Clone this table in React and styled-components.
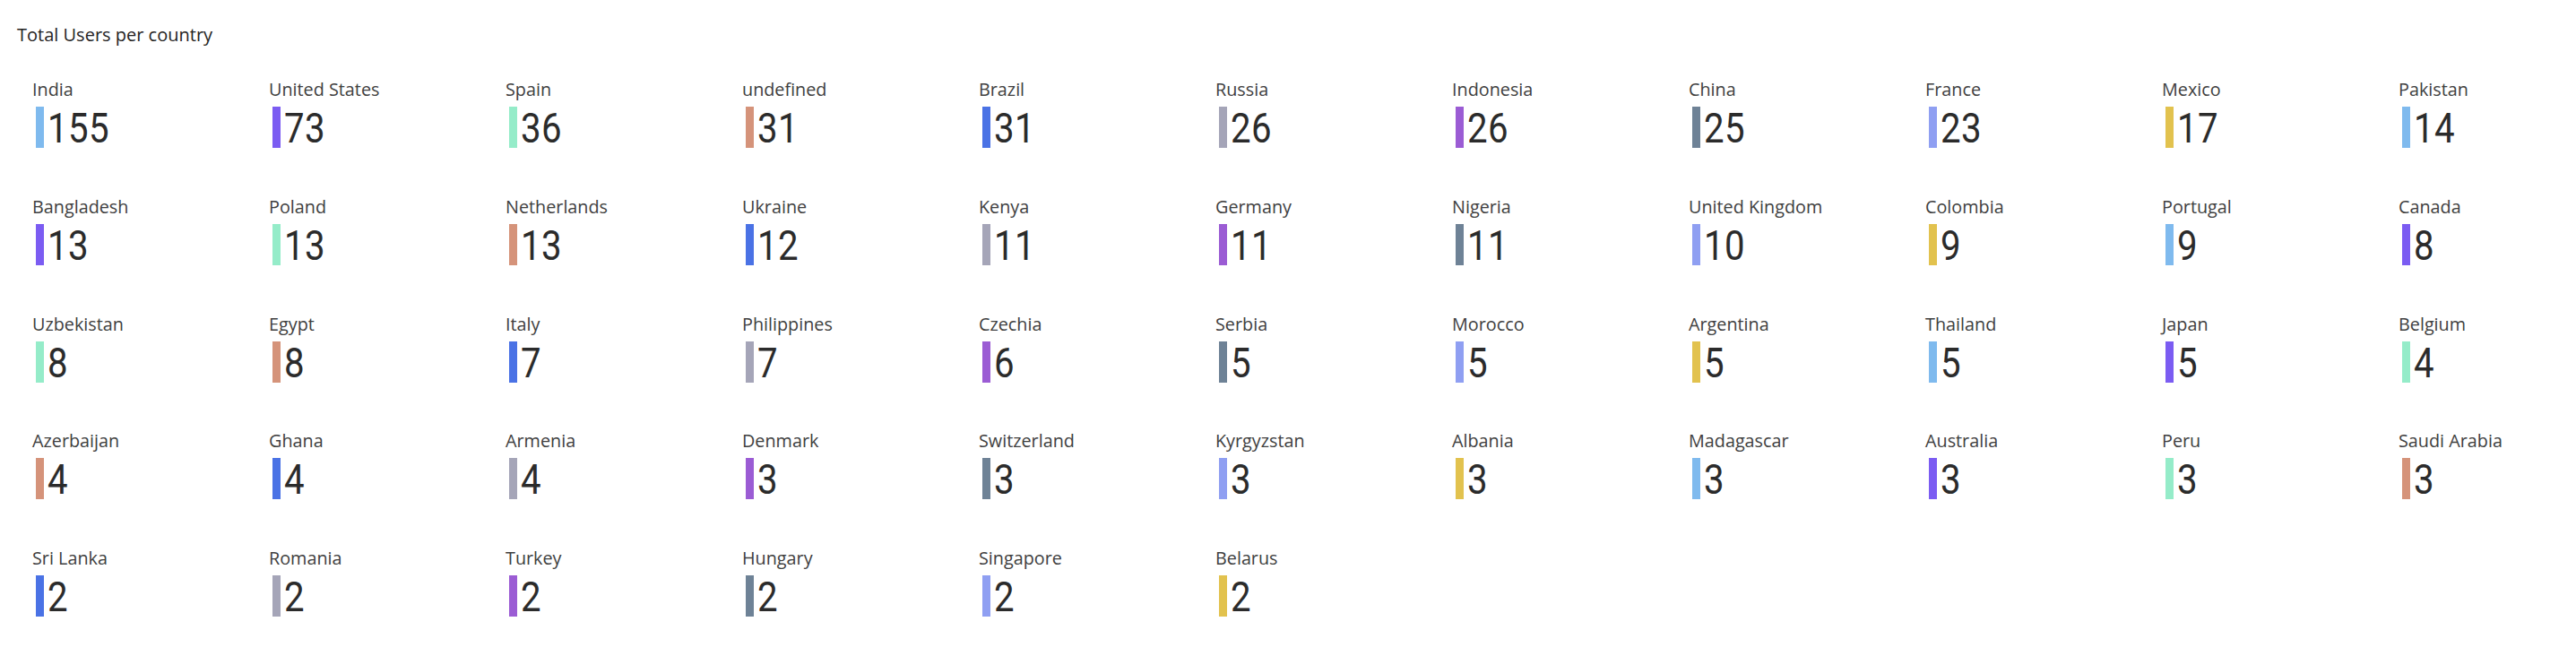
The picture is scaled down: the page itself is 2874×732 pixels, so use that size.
import React from "react";
import styled, { createGlobalStyle } from "styled-components";

const GlobalStyle = createGlobalStyle`
  html, body {
    margin: 0;
    padding: 0;
    background: #ffffff;
  }
  body {
    font-family: "Open Sans", "Noto Sans", sans-serif;
    overflow: hidden;
  }
`;

const PALETTE = [
  "#7FBAEE",
  "#7B5CF2",
  "#95ECC9",
  "#D5937A",
  "#4A72E5",
  "#A5A5B8",
  "#9B5CD4",
  "#6E8296",
  "#8F9FF2",
  "#E2C24E",
];

const DATA = [
  ["India", 155], ["United States", 73], ["Spain", 36], ["undefined", 31],
  ["Brazil", 31], ["Russia", 26], ["Indonesia", 26], ["China", 25],
  ["France", 23], ["Mexico", 17], ["Pakistan", 14], ["Bangladesh", 13],
  ["Poland", 13], ["Netherlands", 13], ["Ukraine", 12], ["Kenya", 11],
  ["Germany", 11], ["Nigeria", 11], ["United Kingdom", 10], ["Colombia", 9],
  ["Portugal", 9], ["Canada", 8], ["Uzbekistan", 8], ["Egypt", 8],
  ["Italy", 7], ["Philippines", 7], ["Czechia", 6], ["Serbia", 5],
  ["Morocco", 5], ["Argentina", 5], ["Thailand", 5], ["Japan", 5],
  ["Belgium", 4], ["Azerbaijan", 4], ["Ghana", 4], ["Armenia", 4],
  ["Denmark", 3], ["Switzerland", 3], ["Kyrgyzstan", 3], ["Albania", 3],
  ["Madagascar", 3], ["Australia", 3], ["Peru", 3], ["Saudi Arabia", 3],
  ["Sri Lanka", 2], ["Romania", 2], ["Turkey", 2], ["Hungary", 2],
  ["Singapore", 2], ["Belarus", 2],
];

const Visual = styled.section`
  width: 100%;
  box-sizing: border-box;
  padding: 25px 0 0 19px;
`;

const Title = styled.h2`
  margin: 0;
  font-family: "Open Sans", "Noto Sans", sans-serif;
  font-size: 20px;
  line-height: 27px;
  font-weight: 400;
  color: #252423;
`;

const CardGrid = styled.div`
  display: grid;
  grid-template-columns: repeat(10, 264px) minmax(0, 1fr);
  row-gap: 50.75px;
  margin-top: 35px;
  padding-left: 17px;
`;

const Card = styled.div`
  display: flex;
  flex-direction: column;
  min-width: 0;
`;

const Label = styled.div`
  font-family: "Open Sans", "Noto Sans", sans-serif;
  font-size: 19.8px;
  line-height: 26px;
  color: #404040;
  white-space: nowrap;
  margin-bottom: 6px;
`;

const ValueRow = styled.div`
  display: flex;
  align-items: flex-start;
  gap: 4px;
  padding-left: 4px;
`;

const Accent = styled.span`
  flex: none;
  width: 9px;
  height: 46px;
  background: ${(p) => p.$color};
`;

const Value = styled.span`
  display: inline-block;
  font-family: "Roboto", "Open Sans", sans-serif;
  font-size: 45.7px;
  line-height: 46px;
  margin-top: 2px;
  letter-spacing: 0.5px;
  color: #2b2b2b;
  transform: scaleX(0.88);
  transform-origin: left center;
`;

export default function App() {
  return (
    <>
      <GlobalStyle />
      <Visual>
        <Title>Total Users per country</Title>
        <CardGrid>
          {DATA.map(([name, value], i) => (
            <Card key={name}>
              <Label>{name}</Label>
              <ValueRow>
                <Accent $color={PALETTE[i % PALETTE.length]} />
                <Value>{value}</Value>
              </ValueRow>
            </Card>
          ))}
        </CardGrid>
      </Visual>
    </>
  );
}
